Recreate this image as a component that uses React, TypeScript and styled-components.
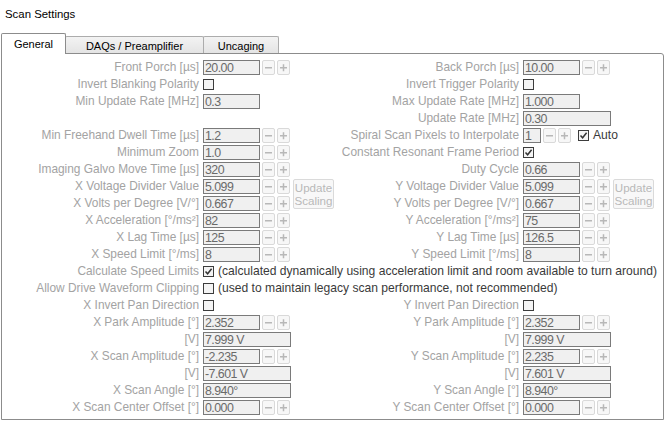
import React from "react";
import styled, { createGlobalStyle } from "styled-components";

const GlobalStyle = createGlobalStyle`
  html, body { margin: 0; padding: 0; background: #ffffff; }
  body { font-family: "Liberation Sans", Arial, sans-serif; }
`;

const Page = styled.div`
  width: 668px;
  height: 423px;
  overflow: hidden;
  background: #ffffff;
`;

const Title = styled.div`
  height: 33px;
  box-sizing: border-box;
  padding: 6px 0 0 5px;
  font-size: 11.4px;
  line-height: 16px;
  color: #000000;
`;

const TabStrip = styled.div`
  display: flex;
  align-items: flex-end;
  height: 20px;
  padding-left: 1px;
`;

const Tab = styled.div<{ $active?: boolean; $w: number }>`
  box-sizing: border-box;
  width: ${(p) => p.$w}px;
  display: flex;
  align-items: center;
  justify-content: center;
  font-size: 11px;
  color: #000000;
  border: 1px solid ${(p) => (p.$active ? "#8c8c8c" : "#acacac")};
  border-bottom: none;
  border-radius: 2px 2px 0 0;
  & + & { margin-left: -1px; }
  ${(p) =>
    p.$active
      ? `height: 21px; margin-bottom: -1px; background: #ffffff; position: relative; z-index: 1; padding-bottom: 1px;`
      : `height: 17px; background: linear-gradient(#f3f3f3, #e4e4e4); padding-top: 1px;`}
`;

const Panel = styled.div`
  margin-left: 1px;
  width: 663px;
  height: 367px;
  box-sizing: border-box;
  border: 1px solid #8c8c8c;
  border-top-right-radius: 3px;
  padding: 5px 0 0 0;
  background: #ffffff;
`;

const Columns = styled.div`
  display: grid;
  grid-template-columns: 320px 320px;
`;

const FieldGrid = styled.div`
  display: grid;
  grid-template-columns: 201px 90px 41px;
  grid-auto-rows: 17px;
`;

const WideRow = styled.div`
  display: grid;
  grid-template-columns: 201px auto;
  height: 17px;
`;

const Label = styled.div`
  grid-column: 1;
  box-sizing: border-box;
  padding-right: 4px;
  text-align: right;
  white-space: nowrap;
  font-size: 11.9px;
  line-height: 17px;
  color: #a3a3a3;
`;

const Controls = styled.div<{ $span?: boolean }>`
  grid-column: ${(p) => (p.$span ? "2 / span 2" : "2")};
  display: flex;
  align-items: center;
  gap: 2px;
  white-space: nowrap;
`;

const TextBox = styled.div<{ $w: number }>`
  box-sizing: border-box;
  width: ${(p) => p.$w}px;
  height: 15px;
  border: 1px solid #7a7a7a;
  background: #f0f0f0;
  padding-left: 1px;
  font-family: "Liberation Sans", Arial, sans-serif;
  font-size: 12.4px;
  letter-spacing: -0.55px;
  line-height: 14px;
  color: #6a6a6a;
  overflow: hidden;
  white-space: nowrap;
`;

const StepButton = styled.div`
  box-sizing: border-box;
  width: 13px;
  height: 15px;
  border: 1px solid #d9d9d9;
  border-radius: 2px;
  background: #f7f7f7;
  display: flex;
  align-items: center;
  justify-content: center;
  color: #b8b8b8;
`;

const CheckBoxBox = styled.div<{ $gap?: number }>`
  box-sizing: border-box;
  width: 11px;
  height: 11px;
  border: 1px solid #3c3c3c;
  background: #f4f4f4;
  display: flex;
  align-items: center;
  justify-content: center;
  margin-left: ${(p) => p.$gap ?? 0}px;
  flex: none;
`;

const Note = styled.span`
  font-size: 12.1px;
  line-height: 17px;
  color: #3a3a3a;
  margin-left: 2px;
`;

const UpdateButton = styled.div`
  grid-column: 3;
  grid-row: span 2;
  box-sizing: border-box;
  width: 41px;
  height: 30px;
  margin-top: 1px;
  border: 1px solid #dadada;
  border-radius: 2px;
  background: #f8f8f8;
  display: flex;
  flex-direction: column;
  align-items: center;
  justify-content: center;
  font-size: 11.6px;
  line-height: 13px;
  color: #b8b8b8;
`;

const Spacer = styled.div`
  grid-column: 1 / -1;
`;

const Minus = () => (
  <svg width="9" height="9" viewBox="0 0 9 9">
    <rect x="1" y="4" width="7" height="1.5" fill="currentColor" />
  </svg>
);

const Plus = () => (
  <svg width="9" height="9" viewBox="0 0 9 9">
    <rect x="1" y="4" width="7" height="1.5" fill="currentColor" />
    <rect x="3.75" y="1.25" width="1.5" height="7" fill="currentColor" />
  </svg>
);

const CheckBox = ({ checked, gap }: { checked?: boolean; gap?: number }) => (
  <CheckBoxBox $gap={gap}>
    {checked && (
      <svg width="9" height="9" viewBox="0 0 9 9">
        <path d="M1.5 4.5 L3.6 6.8 L7.6 1.8" fill="none" stroke="#333" strokeWidth="1.5" />
      </svg>
    )}
  </CheckBoxBox>
);

type Row =
  | { kind: "spin"; label: string; value: string; update?: boolean }
  | { kind: "box"; label: string; value: string }
  | { kind: "wide"; label: string; value: string }
  | { kind: "check"; label: string; checked?: boolean }
  | { kind: "spiral"; label: string; value: string }
  | { kind: "empty" };

const Spinner = ({ value }: { value: string }) => (
  <>
    <TextBox $w={57}>{value}</TextBox>
    <StepButton>
      <Minus />
    </StepButton>
    <StepButton>
      <Plus />
    </StepButton>
  </>
);

const Field = ({ row }: { row: Row }) => {
  if (row.kind === "empty") return <Spacer />;
  return (
    <>
      <Label>{row.label}</Label>
      {row.kind === "spin" && (
        <Controls>
          <Spinner value={row.value} />
        </Controls>
      )}
      {row.kind === "spin" && row.update && (
        <UpdateButton>
          <span>Update</span>
          <span>Scaling</span>
        </UpdateButton>
      )}
      {row.kind === "box" && (
        <Controls>
          <TextBox $w={57}>{row.value}</TextBox>
        </Controls>
      )}
      {row.kind === "wide" && (
        <Controls>
          <TextBox $w={88}>{row.value}</TextBox>
        </Controls>
      )}
      {row.kind === "check" && (
        <Controls>
          <CheckBox checked={row.checked} />
        </Controls>
      )}
      {row.kind === "spiral" && (
        <Controls $span>
          <TextBox $w={18}>{row.value}</TextBox>
          <StepButton>
            <Minus />
          </StepButton>
          <StepButton>
            <Plus />
          </StepButton>
          <CheckBox checked gap={5} />
          <Note>Auto</Note>
        </Controls>
      )}
    </>
  );
};

const leftTop: Row[] = [
  { kind: "spin", label: "Front Porch [µs]", value: "20.00" },
  { kind: "check", label: "Invert Blanking Polarity" },
  { kind: "box", label: "Min Update Rate [MHz]", value: "0.3" },
  { kind: "empty" },
  { kind: "spin", label: "Min Freehand Dwell Time [µs]", value: "1.2" },
  { kind: "spin", label: "Minimum Zoom", value: "1.0" },
  { kind: "spin", label: "Imaging Galvo Move Time [µs]", value: "320" },
  { kind: "spin", label: "X Voltage Divider Value", value: "5.099", update: true },
  { kind: "spin", label: "X Volts per Degree [V/°]", value: "0.667" },
  { kind: "spin", label: "X Acceleration [°/ms²]", value: "82" },
  { kind: "spin", label: "X Lag Time [µs]", value: "125" },
  { kind: "spin", label: "X Speed Limit [°/ms]", value: "8" },
];

const rightTop: Row[] = [
  { kind: "spin", label: "Back Porch [µs]", value: "10.00" },
  { kind: "check", label: "Invert Trigger Polarity" },
  { kind: "box", label: "Max Update Rate [MHz]", value: "1.000" },
  { kind: "wide", label: "Update Rate [MHz]", value: "0.30" },
  { kind: "spiral", label: "Spiral Scan Pixels to Interpolate", value: "1" },
  { kind: "check", label: "Constant Resonant Frame Period", checked: true },
  { kind: "spin", label: "Duty Cycle", value: "0.66" },
  { kind: "spin", label: "Y Voltage Divider Value", value: "5.099", update: true },
  { kind: "spin", label: "Y Volts per Degree [V/°]", value: "0.667" },
  { kind: "spin", label: "Y Acceleration [°/ms²]", value: "75" },
  { kind: "spin", label: "Y Lag Time [µs]", value: "126.5" },
  { kind: "spin", label: "Y Speed Limit [°/ms]", value: "8" },
];

const axisRows = (a: string, park: string, parkV: string, amp: string, ampV: string): Row[] => [
  { kind: "check", label: `${a} Invert Pan Direction` },
  { kind: "spin", label: `${a} Park Amplitude [°]`, value: park },
  { kind: "wide", label: "[V]", value: parkV },
  { kind: "spin", label: `${a} Scan Amplitude [°]`, value: amp },
  { kind: "wide", label: "[V]", value: ampV },
  { kind: "wide", label: `${a} Scan Angle [°]`, value: "8.940°" },
  { kind: "spin", label: `${a} Scan Center Offset [°]`, value: "0.000" },
];

const wideRows = [
  {
    label: "Calculate Speed Limits",
    checked: true,
    note: "(calculated dynamically using acceleration limit and room available to turn around)",
  },
  {
    label: "Allow Drive Waveform Clipping",
    checked: false,
    note: "(used to maintain legacy scan performance, not recommended)",
  },
];

const Column = ({ rows }: { rows: Row[] }) => (
  <FieldGrid>
    {rows.map((r, i) => (
      <Field key={i} row={r} />
    ))}
  </FieldGrid>
);

export default function App() {
  return (
    <Page>
      <GlobalStyle />
      <Title>Scan Settings</Title>
      <TabStrip>
        <Tab $active $w={65}>General</Tab>
        <Tab $w={139}>DAQs / Preamplifier</Tab>
        <Tab $w={76}>Uncaging</Tab>
      </TabStrip>
      <Panel>
        <Columns>
          <Column rows={leftTop} />
          <Column rows={rightTop} />
        </Columns>
        {wideRows.map((w) => (
          <WideRow key={w.label}>
            <Label>{w.label}</Label>
            <Controls>
              <CheckBox checked={w.checked} />
              <Note>{w.note}</Note>
            </Controls>
          </WideRow>
        ))}
        <Columns>
          <Column rows={axisRows("X", "2.352", "7.999 V", "-2.235", "-7.601 V")} />
          <Column rows={axisRows("Y", "2.352", "7.999 V", "2.235", "7.601 V")} />
        </Columns>
      </Panel>
    </Page>
  );
}
